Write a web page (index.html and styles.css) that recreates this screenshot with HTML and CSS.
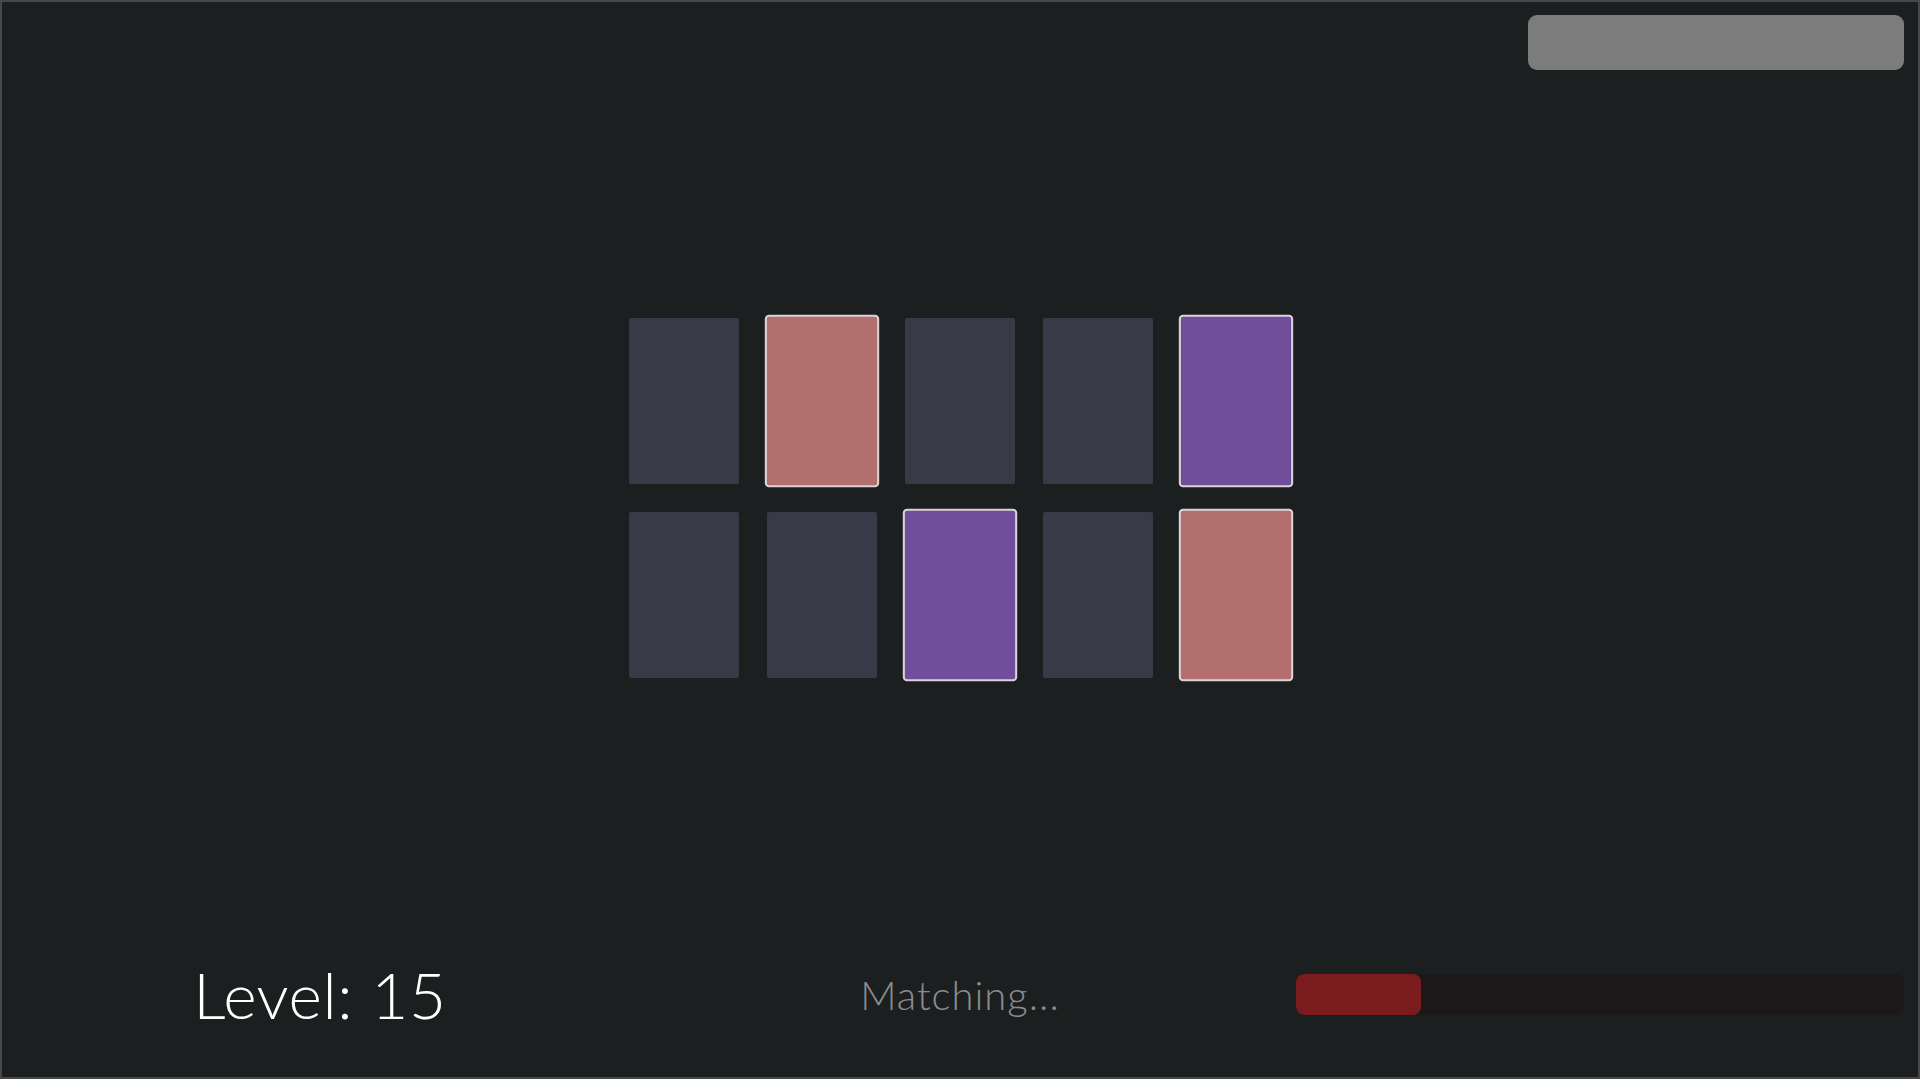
FILE: index.html
```html
<!DOCTYPE html>
<html lang="en">
<head>
<meta charset="utf-8">
<title>Memory Match</title>
<link rel="stylesheet" href="styles.css">
</head>
<body>
<div class="app">
  <header class="topbar">
    <button class="menu-btn" type="button" aria-label="Menu"></button>
  </header>
  <main class="board">
    <div class="grid">
      <div class="card"></div>
      <div class="card card--open card--rose"></div>
      <div class="card"></div>
      <div class="card"></div>
      <div class="card card--open card--violet"></div>
      <div class="card"></div>
      <div class="card"></div>
      <div class="card card--open card--violet"></div>
      <div class="card"></div>
      <div class="card card--open card--rose"></div>
    </div>
  </main>
  <footer class="footer">
    <div class="level">Level: 15</div>
    <div class="status">Matching...</div>
    <div class="progress"><div class="progress-fill" style="width: 20.6%"></div></div>
  </footer>
</div>
</body>
</html>
```
FILE: styles.css
```css
html, body {
  margin: 0;
  padding: 0;
  background: #1c1f20;
}

.app {
  height: 1079px;
  box-sizing: border-box;
  border: 2px solid #46484a;
  display: flex;
  flex-direction: column;
  font-family: "Lato", "Liberation Sans", sans-serif;
}

.topbar {
  display: flex;
  justify-content: flex-end;
  padding: 13px 14px 0;
}

.menu-btn {
  width: 376px;
  height: 55px;
  border: none;
  border-radius: 9px;
  background: #7b7c7b;
  padding: 0;
}

.board {
  flex: 1;
  display: flex;
  justify-content: center;
  align-items: flex-start;
  padding-top: 248px;
}

.grid {
  display: grid;
  grid-template-columns: repeat(5, 110px);
  grid-auto-rows: 166px;
  gap: 28px;
}

.card {
  background: #383a48;
  border-radius: 2px;
  box-sizing: border-box;
}

.card--open {
  border: 2px solid #dbd3d7;
  border-radius: 4px;
  transform: scale(1.04);
}

.card--rose {
  background: #b36f6e;
}

.card--violet {
  background: #714e9b;
}

.footer {
  display: grid;
  grid-template-columns: repeat(3, 1fr);
  column-gap: 32px;
  align-items: center;
  padding: 0 14px 44px;
}

.level {
  text-align: center;
  color: #ffffff;
  font-size: 64px;
  font-weight: 300;
  letter-spacing: 0.6px;
  line-height: 77px;
}

.status {
  text-align: center;
  color: #8b8c8d;
  font-size: 40px;
  font-weight: 300;
  letter-spacing: 1px;
}

.progress {
  height: 41px;
  background: #1c1718;
  border-radius: 8px;
  overflow: hidden;
}

.progress-fill {
  height: 100%;
  background: #7b1b1e;
  border-radius: 8px;
}
```
